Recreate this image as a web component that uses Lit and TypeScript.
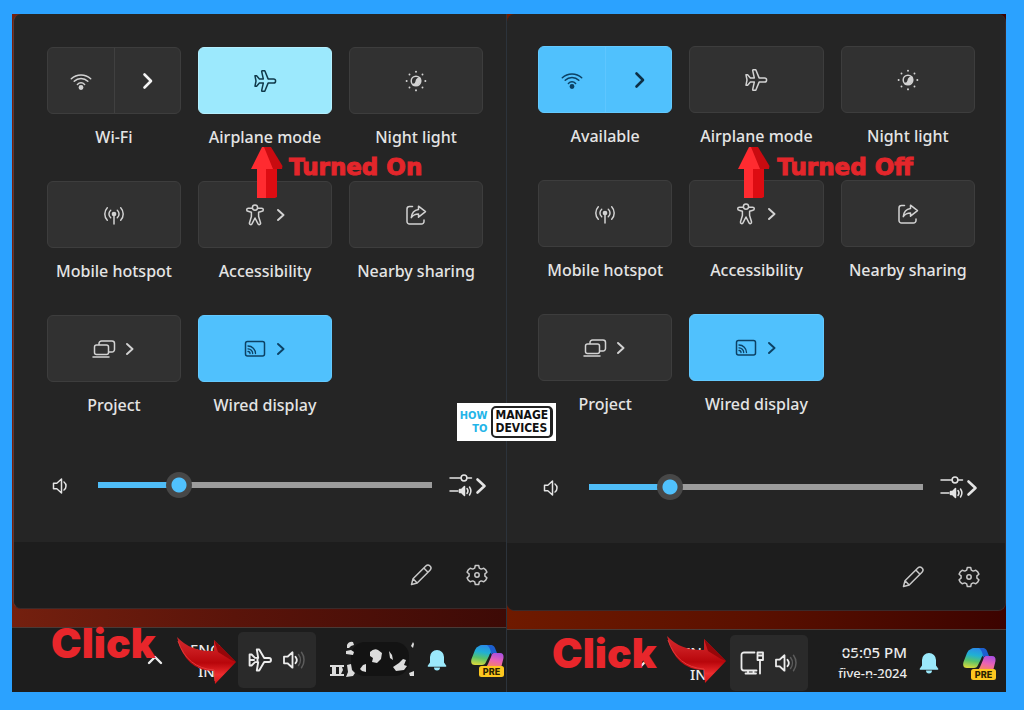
import { LitElement, html, css, svg, nothing } from "lit";
import { customElement, property } from "lit/decorators.js";
import { classMap } from "lit/directives/class-map.js";

const icon = (w: number, h: number, body: unknown) => html`
  <svg width=${w} height=${h} viewBox="0 0 ${w} ${h}" fill="none" stroke="currentColor"
    stroke-width="1.5" stroke-linejoin="round" stroke-linecap="round" aria-hidden="true">${body}</svg>`;

const icons: Record<string, () => unknown> = {
  wifi: () => icon(24, 24, svg`
    <circle cx="12" cy="18.500" r="1.700" fill="currentColor"/>
    <path d="M8.400 15.400a5 5 0 0 1 7.200 0M5.200 12.300a9.600 9.600 0 0 1 13.600 0M2.300 9.800a14 14 0 0 1 19.400 0"/>`),
  plane: () => icon(24, 24, svg`
    <path d="M2 6.800h1.600l2.800 3.100h3.900L8.700 2.600q-.1-.8.600-.8h2.500l3.300 8.100h5.400a2.100 2.100 0 0 1 0 4.200h-5.400l-3.300 8.100H9.300q-.7 0-.6-.8l1.600-7.300H6.400l-2.800 3.100H2L3 12z"/>`),
  night: () => icon(24, 24, svg`
    <circle cx="12" cy="12" r="4.8"/>
    <path d="M15.600 8.800a5 5 0 0 1-6.800 6.800c2.600-.3 3.200-1.300 3.400-3.100.3-2 1.300-3 3.400-3.700z" fill="currentColor"/>
    <path stroke-width="1.900" d="M12 2.600v.1M12 21.300v.1M2.600 12h.1M21.300 12h.1M5.500 5.500v.1M18.500 5.500v.1M5.500 18.400v.1M18.500 18.400v.1"/>`),
  hotspot: () => icon(24, 24, svg`
    <circle cx="12" cy="11" r="1.600" fill="currentColor"/>
    <path d="M12 12v9M8.700 14.800a5 5 0 0 1 0-7.600M15.300 14.800a5 5 0 0 0 0-7.600M5.300 17.300a9.200 9.200 0 0 1 0-12.600M18.700 17.300a9.200 9.200 0 0 0 0-12.600"/>`),
  person: () => icon(24, 24, svg`
    <circle cx="12" cy="4.600" r="2.600"/>
    <path d="M9.400 5.300H5.300C3.300 5.300 3.200 8 5 8.200l3.400 1v4.300L6.500 19.800c-.5 1.800 1.900 2.600 2.600.9L12 15l2.900 5.700c.7 1.700 3.100.9 2.600-.9l-1.900-6.300V9.200l3.400-1c1.800-.2 1.700-2.900-.3-2.900h-4.100"/>`),
  share: () => icon(24, 24, svg`
    <path d="M8.500 3.500H5.500A2.500 2.500 0 0 0 3 6v12.500A2.500 2.500 0 0 0 5.500 21h12a2.500 2.500 0 0 0 2.500-2.500V17"/>
    <path d="M14.500 3.200 21.500 8.600l-7 5.600v-3.200c-3 0-5.300.9-7.200 3.600.4-4.600 2.900-7.600 7.200-8.200z"/>`),
  project: () => icon(24, 20, svg`
    <path d="M7 5.500V4.500A2.500 2.500 0 0 1 9.500 2h10.500A2.500 2.500 0 0 1 22.500 4.500v6A2.500 2.500 0 0 1 20 13h-3"/>
    <rect x="2.500" y="6" width="14" height="9.500" rx="2"/><path d="M1 18h16"/>`),
  cast: () => icon(24, 20, svg`
    <rect x="2.500" y="2.500" width="19" height="14.500" rx="2"/>
    <path stroke-width="1.300" d="M5 7a7.500 7.500 0 0 1 7.500 7.500M5 9.800a4.700 4.700 0 0 1 4.700 4.700M5 12.500a2 2 0 0 1 2 2"/>`),
  chevron: () => icon(10, 14, svg`<path stroke-width="1.900" d="M1 2l5.500 5L1 12"/>`),
  chevronBig: () => icon(12, 18, svg`<path stroke-width="2.600" d="M3.500 2.500 10 9l-6.500 6.500"/>`),
  volume: () => icon(20, 22, svg`
    <path d="M1.500 9.200h3.300L9.500 5v14l-4.700-4.200H1.500z"/><path d="M12 8a5 5 0 0 1 0 8"/>`),
  mixer: () => icon(38, 24, svg`
    <circle cx="15" cy="5" r="2.900"/><path d="M1 5h10.500M18.500 5h4M1 18h8"/>
    <path d="M10.500 16.500h2l3-3v9l-3-3h-2z" fill="currentColor"/>
    <path d="M18 15.500a4 4 0 0 1 0 5M20.500 14a7 7 0 0 1 0 8"/>
    <path stroke-width="2.600" d="M28.500 6.500 35.500 13l-7 6.500"/>`),
  pencil: () => icon(24, 24, svg`
    <path d="M2.500 21.500 4 15.800 16.800 3a2.900 2.900 0 0 1 4.200 4.200L8.200 20zM14.800 5l4.200 4.200M4 15.800 8.200 20"/>`),
  gear: () => icon(24, 24, svg`
    <circle cx="12" cy="12" r="2.200"/>
    <path d="M10.300 2.500h3.400l.6 2.600 1.900 1 2.600-.8 1.900 1.600 1.200 2.300-2 1.700v2.200l2 1.700-1.200 2.300-1.900 1.600-2.600-.8-1.900 1-.6 2.600h-3.400l-.6-2.600-1.900-1-2.600.8-1.900-1.600-1.200-2.300 2-1.700v-2.200l-2-1.700 1.200-2.300 1.900-1.600 2.600.8 1.900-1z"/>`),
  up: () => icon(18, 10, svg`<path stroke-width="2.400" d="M3 8l6-6 6 6"/>`),
  taskVolume: () => icon(24, 24, svg`
    <path stroke-width="1.800" d="M2 8.700h3.500L10.500 4.300v15.400L5.500 15.300H2z"/><path stroke-width="1.800" d="M13.500 8.800a5 5 0 0 1 0 6.400"/>
    <path stroke="#5c5c5c" d="M16.500 6.500a9 9 0 0 1 0 11M19.500 4.300a13 13 0 0 1 0 15.400"/>`),
  taskPlane: () => icon(24, 24, svg`
    <path stroke-width="1.900" d="M1.600 6.500h2l3.400 3.400h3.200L8.800 1.500h2.400l5 8.500h4.800a2 2 0 0 1 0 4h-4.800l-5 8.500H8.800l1.400-8.400H7l-3.400 3.400h-2zM2 12h4M9.500 10v4"/>`),
  ethernet: () => icon(24, 24, svg`
    <path stroke-width="1.800" d="M14.500 1.500H4A2.500 2.500 0 0 0 1.500 4v13A2.500 2.500 0 0 0 4 19.500h12.500M8 19.500V22.500M13.500 19.500V22.500M5.500 22.500h10.500"/>
    <path stroke-width="1.800" d="M17.500 1.500h5.500v7.500h-5.500zM17.500 4.500h5.500M20 9v13.500"/>`),
  bell: () => icon(20, 22, svg`
    <path stroke="none" fill="#9be9fb" d="M10 1a7 7 0 0 1 7 7v5.500l2.300 3.300q.3 1-.7 1H1.400q-1 0-.7-1L3 13.500V8a7 7 0 0 1 7-7zM7 18.500h6a3 3 0 0 1-6 0z"/>`),
};

interface Tile {
  label: string;
  icon: string;
  arrow?: boolean;
  split?: boolean;
  tone?: "pale" | "blue";
}

const tilesFor = (on: boolean): Tile[] => [
  { label: on ? "Wi-Fi" : "Available", icon: "wifi", split: true, tone: on ? undefined : "blue" },
  { label: "Airplane mode", icon: "plane", tone: on ? "pale" : undefined },
  { label: "Night light", icon: "night" },
  { label: "Mobile hotspot", icon: "hotspot" },
  { label: "Accessibility", icon: "person", arrow: true },
  { label: "Nearby sharing", icon: "share" },
  { label: "Project", icon: "project", arrow: true },
  { label: "Wired display", icon: "cast", arrow: true, tone: "blue" },
];

@customElement("quick-settings")
class QuickSettings extends LitElement {
  @property({ type: Boolean, reflect: true }) on = false;

  static styles = css`
    :host {
      display: block;
      position: relative;
      background: #252525;
      border: 1px solid #3a2a2a;
      border-top: 0;
      border-left: 0;
      border-radius: 8px;
      color: #e4e4e4;
      padding-top: 32px;
    }
    :host([on]) {
      padding-top: 33px;
      border-radius: 8px 0 0 8px;
      border-left: 1px solid #5e3a34;
      border-right: 0;
      margin-left: 1px;
    }
    button { font: inherit; color: inherit; margin: 0; padding: 0; border: 0; background: none; }
    svg { display: block; flex: none; }
    .grid {
      display: grid;
      grid-template-columns: repeat(3, 1fr);
      gap: 33px 17px;
      padding: 0 30px 0 31px;
    }
    :host([on]) .grid { padding: 0 23px 0 33px; }
    .item { position: relative; text-align: center; min-width: 0; }
    .tile {
      box-sizing: border-box;
      display: flex;
      align-items: center;
      justify-content: center;
      gap: 10px;
      width: 100%;
      height: 67px;
      border: 1px solid #3d3d3d;
      border-radius: 6px;
      background: #313131;
      color: #d2d2d2;
    }
    .split { gap: 0; }
    .half { flex: 1; height: 100%; display: flex; align-items: center; justify-content: center; color: inherit; }
    .half + .half { border-left: 1px solid #404040; color: #f4f4f4; }
    .tile.pale { background: #9ce9fd; border-color: #b4effe; color: #10394a; }
    .tile.blue { background: #50c1fd; border-color: #63c9fe; color: #0c4164; }
    .tile.blue .half + .half { border-color: #5ec6ff; color: #0d2f45; }
    .label {
      display: block;
      margin-top: 12px;
      font-size: 16px;
      font-weight: 500;
      line-height: 22px;
      white-space: nowrap;
    }
    .volume { display: flex; align-items: center; height: 26px; margin-top: 59px; padding: 0 27px 0 36px; gap: 17px; }
    :host([on]) .volume { margin-top: 56px; padding: 0 19px 0 38px; }
    .volume input {
      -webkit-appearance: none;
      appearance: none;
      flex: 1;
      min-width: 0;
      height: 26px;
      margin: 0 0 0 9px;
      background: linear-gradient(to right, #4fbdf7 24%, #9c9c9c 24%) center / 100% 6px no-repeat;
      border-radius: 3px;
    }
    .volume input::-webkit-slider-thumb {
      -webkit-appearance: none;
      width: 26px;
      height: 26px;
      border-radius: 50%;
      background: radial-gradient(circle, #50c1fd 7px, #474747 8px);
    }
    .foot {
      box-sizing: border-box;
      display: flex;
      align-items: center;
      justify-content: flex-end;
      gap: 32px;
      height: 67px;
      margin-top: 43px;
      padding-right: 24px;
      background: #1d1d1d;
      border-radius: 0 0 7px 7px;
      color: #c8c8c8;
    }
    :host([on]) .foot { margin-top: 44px; padding-right: 17px; height: 66px; border-radius: 0 0 0 7px; }
    .pointer { position: absolute; left: 49px; top: 101px; z-index: 1; }
    .state {
      position: absolute;
      left: 88px;
      top: 107px;
      z-index: 1;
      font: 900 23px/28px "DejaVu Sans", sans-serif;
      -webkit-text-stroke: 1px currentColor;
      color: #e3262b;
      white-space: nowrap;
    }
    :host([on]) .pointer { left: 53px; top: 100px; }
    :host([on]) .state { left: 91px; top: 106px; }
  `;

  private tile(t: Tile) {
    const cls = { tile: true, split: !!t.split, pale: t.tone === "pale", blue: t.tone === "blue" };
    const id = t.icon;
    return html`<div class="item">
      ${t.split
        ? html`<div class=${classMap(cls)}>
            <button class="half" aria-labelledby=${id}>${icons[t.icon]()}</button>
            <button class="half" aria-label="Networks">${icons.chevronBig()}</button>
          </div>`
        : html`<button class=${classMap(cls)} aria-labelledby=${id}>
            ${icons[t.icon]()}${t.arrow ? icons.chevron() : nothing}
          </button>`}
      <span class="label" id=${id}>${t.label}</span>
      ${t.icon === "plane"
        ? html`<svg class="pointer" width="32" height="52" viewBox="0 0 32 52" aria-hidden="true">
              <path fill="#c90b10" d="M11 0h9l11.500 19-.5 3H19z"/>
              <path fill="#ff2b30" d="M0 22 11 0h2l9 22h-7v29H6V22z"/>
              <path fill="#dd0c12" d="M15 22h11v28l-2 1h-9z"/>
            </svg>
            <span class="state">${this.on ? "Turned On" : "Turned Off"}</span>`
        : nothing}
    </div>`;
  }

  render() {
    return html`
      <div class="grid">${tilesFor(this.on).map((t) => this.tile(t))}</div>
      <div class="volume">
        ${icons.volume()}
        <input type="range" min="0" max="100" value="22" aria-label="Volume" />
        <button aria-label="Sound output">${icons.mixer()}</button>
      </div>
      <div class="foot">
        <button aria-label="Edit quick settings">${icons.pencil()}</button>
        <button aria-label="All settings">${icons.gear()}</button>
      </div>`;
  }
}

@customElement("task-bar")
class TaskBar extends LitElement {
  @property({ type: Boolean, reflect: true }) on = false;

  static styles = css`
    :host {
      box-sizing: border-box;
      position: relative;
      display: flex;
      align-items: center;
      justify-content: flex-end;
      flex: 1;
      min-height: 62px;
      padding: 3px 10px 0 0;
      background: #1d1d1d;
      border-top: 1px solid #4a3a36;
      color: #ececec;
      font-size: 15px;
    }
    :host([on]) { padding: 0 2px 0 0; }
    button { font: inherit; color: inherit; margin: 0; padding: 0; border: 0; background: none; }
    svg { display: block; flex: none; }
    .lang { width: 48px; margin-left: 26px; text-align: left; font-weight: 500; line-height: 22px; }
    .lang span { display: block; }
    .lang span + span { padding-left: 8px; }
    .net {
      display: flex;
      align-items: center;
      justify-content: center;
      gap: 10px;
      width: 78px;
      height: 56px;
      border-radius: 5px;
      background: #2a2a2a;
    }
    .clock { position: relative; width: 86px; margin: 0 12px 0 13px; text-align: right; line-height: 21px; white-space: nowrap; }
    .clock span { display: block; font-weight: 500; }
    .clock .small { font-size: 13px; }
    .smear { position: absolute; inset: 0; }
    .pilot { margin-left: 24px; }
    .click {
      position: absolute;
      left: 45px;
      top: -1px;
      font: 900 41px/48px Inter, sans-serif;
      color: #e8262b;
    }
    :host([on]) .click { left: 39px; top: -9px; }
    .pointer { position: absolute; right: 279px; top: 6px; }
    :host([on]) .pointer { right: 269px; top: 9px; }
  `;

  render() {
    const on = this.on;
    return html`
      <button aria-label="Show hidden icons">${icons.up()}</button>
      <button class="lang"><span>ENG</span><span>IN</span></button>
      <button class="net" aria-label="Network and volume">
        ${on ? icons.taskPlane() : icons.ethernet()}${icons.taskVolume()}
      </button>
      <button class="clock" aria-label="Clock">
        ${on
          ? html`<svg width="86" height="38" viewBox="0 0 86 38">
              <rect x="22" y="1" width="58" height="34" rx="14" fill="#131313"/>
              <g fill="#dcdcdc">
                <path d="M1 24h8v2H7v7h3v-7H9v-2h6v2h-2l1 3-2 4h3v2H1v-2h2v-7H1z"/>
                <path d="M18 4q2-4 6-3l1 3-3 1-2 2h-2zM17 10l5-1 3 2-1 3-7-1zM18 24l4-1 1 6 3 3-2 3-7 1 2-5zM31 28l3-4 3-1v8l-4-1z"/>
                <path d="M41 11q4-4 8-2l4 3-1 6-4 4-5-1 1-4-3-2zM60 10l3 4 1 5-3-2zM64 26l6-4 4-4 3 1-2 5 3 1-3 4-8 1zM80 32l5-2v5h-4zM82 5l2-4 1 2-1 4z"/>
              </g></svg>`
          : html`<span>05:05 PM</span><span class="small">five-n-2024</span>
            <svg class="smear" width="86" height="42" viewBox="0 0 86 42" stroke="#1d1d1d">
              <path stroke-width="1.500" d="M17 11h22M42 14h14M19 5.500h14M18 28h22M44 34h16M24 36h12"/>
            </svg>`}
      </button>
      <button aria-label="Notifications">${icons.bell()}</button>
      <button class="pilot" aria-label="Copilot">
        <svg width="33" height="34" viewBox="0 0 33 34">
          <defs>
            <linearGradient id="a" x1=".5" y1="0" x2=".3" y2="1">
              <stop offset="0" stop-color="#2a8be8"/><stop offset=".35" stop-color="#20b0d4"/>
              <stop offset=".65" stop-color="#58c26a"/><stop offset="1" stop-color="#d8d93c"/>
            </linearGradient>
            <linearGradient id="b" x1=".7" y1="0" x2=".4" y2="1">
              <stop offset="0" stop-color="#a94fe0"/><stop offset=".5" stop-color="#ea62b4"/><stop offset="1" stop-color="#f88a55"/>
            </linearGradient>
          </defs>
          <path fill="url(#a)" d="M8 3q1-1 3-1h8q3 0 4 3l1 4h-2q-3 0-4 4l-3 6q-1 3-4 3H4q-5 0-3.500-6L4 7q1-3 4-4z"/>
          <path fill="#1c5fd0" d="M16 2h3q4 0 5 3l2 5h-3q-2 0-3 2 0-7-4-10z"/>
          <path fill="url(#b)" d="M23 10h6q4 0 3.500 5L30 25H13q3-1 4-4l3-7q1-4 3-4z"/>
          <rect x="8" y="23" width="25" height="11" rx="2.500" fill="#fdc71f"/>
          <text x="20.500" y="32" text-anchor="middle" font-family="Inter, sans-serif" font-size="9" font-weight="800" fill="#2b2200">PRE</text>
        </svg>
      </button>
      <span class="click">Click</span>
      <svg class="pointer" width="60" height="48" viewBox="0 0 60 48" aria-hidden="true">
        <defs><linearGradient id="r" x1="0" y1="0" x2="0" y2="1">
          <stop offset="0" stop-color="#d2282c"/><stop offset=".3" stop-color="#c81a1e"/>
          <stop offset=".55" stop-color="#b8060b"/><stop offset=".8" stop-color="#ee2c2e"/><stop offset="1" stop-color="#d81418"/>
        </linearGradient></defs>
        <path fill="url(#r)" d="M0 0q14 15 37 14V3l22 22-21 22-1-13Q8 34 0 0z"/>
        <path fill="#960609" d="M37 3l22 22-5-2-13-8z"/>
        <path fill="none" stroke="#e2393a" d="M1 4q9 27 36 29l1 11"/>
      </svg>`;
  }
}

@customElement("app-root")
class AppRoot extends LitElement {
  static styles = css`
    :host {
      box-sizing: border-box;
      display: grid;
      grid-template-columns: 494fr 500fr;
      min-height: 100vh;
      padding: 14px 18px 18px 12px;
      background: #2ba2ff;
      font-family: "Noto Sans", "Open Sans", sans-serif;
    }
    .shot {
      position: relative;
      display: flex;
      flex-direction: column;
      min-width: 0;
      background: linear-gradient(to right, #6f1a00, #5a1000 50%, #3c0300);
    }
    .shot.first { background: linear-gradient(to right, #74200f, #5a140a 45%, #3d0a06); }
    .shot + .shot { border-left: 1px solid #2c333b; }
    .gap { height: 18px; }
    .brand {
      position: absolute;
      left: -50px;
      top: 389px;
      z-index: 2;
      box-sizing: border-box;
      display: flex;
      align-items: center;
      justify-content: center;
      gap: 4px;
      width: 99px;
      height: 38px;
      background: #fff;
      font: 700 12px/13px "Liberation Sans Narrow", "DejaVu Sans Condensed", sans-serif;
      color: #111;
    }
    .how { color: #23b4e8; text-align: right; font-size: 11px; }
    .how span, .dev span { display: block; }
    .dev { border: 2px solid #222; border-radius: 5px; padding: 1px 2px; border-right-width: 3px; }
  `;

  render() {
    return html`
      <section class="shot first">
        <quick-settings on></quick-settings>
        <div class="gap"></div>
        <task-bar on></task-bar>
      </section>
      <section class="shot">
        <quick-settings></quick-settings>
        <div class="gap"></div>
        <task-bar></task-bar>
        <div class="brand">
          <div class="how"><span>HOW</span><span>TO</span></div>
          <div class="dev"><span>MANAGE</span><span>DEVICES</span></div>
        </div>
      </section>`;
  }
}
